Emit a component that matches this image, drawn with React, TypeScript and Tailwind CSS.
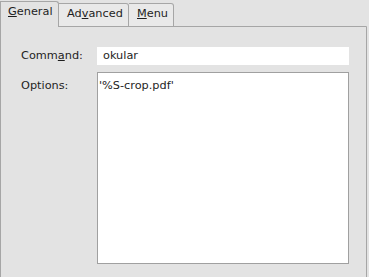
export default function App() {
  return (
    <div
      className="flex h-[277px] w-[369px] flex-col bg-[#e3e3e3] text-[11.3px] text-[#1e1e1e]"
      style={{ fontFamily: '"DejaVu Sans", sans-serif' }}
    >
      {/* tab strip */}
      <div className="flex h-[27px] w-[367px] items-end">
        <div className="flex h-[26px] w-[59px] items-center rounded-tr-[3px] border-x border-t border-[#a6a6a6] bg-[#e3e3e3] pl-[7px] pb-[4px]">
          <span><u>G</u>eneral</span>
        </div>
        <div className="flex h-[24px] w-[70px] items-center rounded-tr-[3px] border-y border-r border-[#a6a6a6] bg-[#e9e9e9] pl-[8px] pb-[1px]">
          <span>Ad<u>v</u>anced</span>
        </div>
        <div className="flex h-[24px] w-[45px] items-center rounded-tr-[3px] border-y border-r border-[#a6a6a6] bg-[#e9e9e9] pl-[8px] pb-[1px]">
          <span><u>M</u>enu</span>
        </div>
        <div className="h-[1px] flex-1 rounded-tr-[3px] bg-[#a6a6a6]" />
      </div>

      {/* page */}
      <div className="flex w-[367px] flex-1 flex-col border-x border-[#a6a6a6] pl-[20px] pt-[20px]">
        <div className="flex items-center">
          <span className="w-[76px]">Comm<u>a</u>nd:</span>
          <div className="flex h-[18px] w-[252px] items-center bg-white pl-[6px]">okular</div>
        </div>
        <div className="mt-[7px] flex">
          <span className="w-[76px] pt-[6px]">Options:</span>
          <div className="h-[192px] w-[252px] border border-[#a0a0a0] bg-white pl-[1px] pt-[5px]">
            '%S-crop.pdf'
          </div>
        </div>
      </div>
    </div>
  )
}
